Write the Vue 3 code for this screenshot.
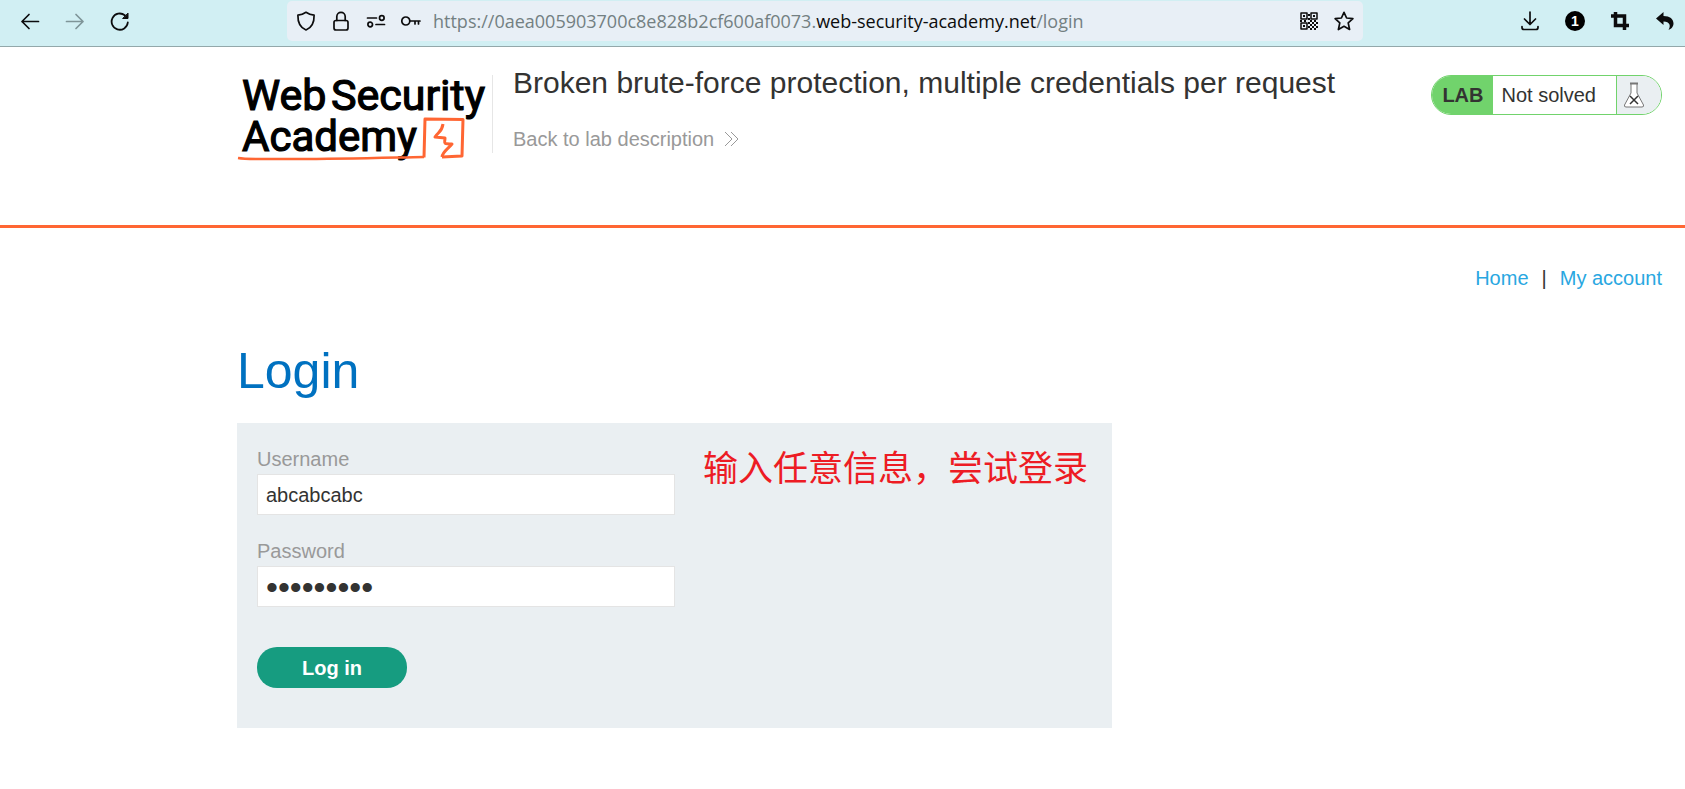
<script setup>
import { ref } from 'vue'

const username = ref('abcabcabc')
const password = ref('abcabcabc')
</script>

<template>
  <div class="page">
    <div class="toolbar">
      <div class="nav">
        <button type="button" aria-label="Back">
          <svg width="20" height="20" viewBox="0 0 20 20"><path d="M18.500 10.500H2M9 3.500L2 10.500L9 17.500" /></svg>
        </button>
        <button type="button" class="dim" aria-label="Forward">
          <svg width="20" height="20" viewBox="0 0 20 20"><path d="M1.500 10.500H18M11 3.500L18 10.500L11 17.500" /></svg>
        </button>
        <button type="button" aria-label="Reload">
          <svg width="20" height="20" viewBox="0 0 20 20">
            <path d="M17.800 11.500A8.100 8.100 0 1 1 14.800 4.300" stroke-width="1.800" />
            <path d="M18 2.500V7.500H13Z" class="solid" stroke-width="1" />
          </svg>
        </button>
      </div>

      <div class="address">
        <button type="button" aria-label="Tracking protection">
          <svg width="20" height="20" viewBox="0 0 20 20"><path d="M10 1.300C7.500 3 4.500 4 1.900 4.200C1.700 11 4 16.500 10 19C16 16.500 18.300 11 18.100 4.200C15.500 4 12.500 3 10 1.300Z" /></svg>
        </button>
        <button type="button" aria-label="Connection security">
          <svg width="20" height="20" viewBox="0 0 20 20"><rect x="3" y="9.500" width="14" height="9.500" rx="2" /><path d="M5.800 9.500V5.500a4.200 4.200 0 0 1 8.400 0V9.500" /></svg>
        </button>
        <button type="button" aria-label="Site permissions">
          <svg width="20" height="20" viewBox="0 0 20 20"><path d="M1.500 7H10.500M10 13.500H18.500" /><circle cx="15.800" cy="7" r="2.300" /><circle cx="4.200" cy="13.500" r="2.300" /></svg>
        </button>
        <button type="button" aria-label="Saved logins">
          <svg width="20" height="20" viewBox="0 0 20 20"><circle cx="4.800" cy="10" r="4" /><path d="M9 10H19M14 10V13M17.500 10V13" /></svg>
        </button>
        <div class="url" role="textbox" aria-label="Address">https://0aea005903700c8e828b2cf600af0073.<span>web-security-academy.net</span>/login</div>
        <button type="button" aria-label="QR code">
          <svg width="20" height="20" viewBox="0 0 20 20">
            <g stroke-width="1.500"><rect x="2" y="2" width="6" height="6" /><rect x="12" y="2" width="6" height="6" /><rect x="2" y="12" width="6" height="6" /></g>
            <path class="fill" d="M4 4h2v2H4zM14 4h2v2h-2zM4 14h2v2H4zM9 3h2v2H9zM9 7h2v2H9zM11 9h2v2h-2zM1 9h2v2H1zM5 9h2v2H5zM15 9h2v2h-2zM9 11h2v2H9zM13 11h2v2h-2zM17 11h2v2h-2zM11 13h2v2h-2zM15 13h2v2h-2zM9 15h2v2H9zM13 15h2v2h-2zM17 15h2v2h-2zM11 17h2v2h-2zM15 17h2v2h-2z" />
          </svg>
        </button>
        <button type="button" aria-label="Bookmark this page">
          <svg width="20" height="20" viewBox="0 0 20 20"><path d="M10 1.300L12.600 7L18.900 7.700L14.200 11.900L15.600 18.500L10 15.300L4.400 18.500L5.800 11.900L1.100 7.700L7.400 7Z" /></svg>
        </button>
      </div>

      <div class="tools">
        <button type="button" aria-label="Downloads">
          <svg width="20" height="20" viewBox="0 0 20 20"><path d="M10 1V13M4.500 8L10 13.500L15.500 8M2 15.500V16.500Q2 18.500 4 18.500H16Q18 18.500 18 16.500V15.500" /></svg>
        </button>
        <button type="button" class="badge" aria-label="One notification"><span>1</span></button>
        <button type="button" aria-label="Screenshot">
          <svg width="20" height="20" viewBox="0 0 20 20"><path class="crop" d="M1 5H14.500V19M5.500 1V14.500H19" /></svg>
        </button>
        <button type="button" aria-label="Undo">
          <svg width="20" height="20" viewBox="0 0 20 20"><path class="fill" d="M1 7.500L8.500 1V5C15 5 18.500 8 18.500 12.500C18.500 16 16 18 13.500 19C16 15 15 10.500 8.500 10.500V14Z" /></svg>
        </button>
      </div>
    </div>

    <header class="header">
      <a href="#" class="logo" aria-label="Web Security Academy">
        <svg width="252" height="98" viewBox="0 0 252 98">
          <g class="wordmark">
            <text x="5" y="45">Web</text>
            <text x="94" y="45">Security</text>
            <text x="5" y="86" class="second">Academy</text>
          </g>
          <g class="mark">
            <path stroke-width="3" d="M187 92.500L188 54L226 54.500L225 91L205 92" />
            <path stroke-width="2.500" d="M1 93C10 94.500 24 94 44 94C90 94.500 140 93 187 92" />
            <path stroke-width="3" d="M206 59C205 67 201 67 198 72L208 73C208 78 205 79 215 79C210 85 206 86 205 92" />
          </g>
        </svg>
      </a>
      <div class="heading">
        <h2>Broken brute-force protection, multiple credentials per request</h2>
        <a href="#" class="back">
          Back to lab description
          <svg width="15" height="16" viewBox="0 0 15 16"><path d="M1 1L8 8L1 15M7 1L14 8L7 15" /></svg>
        </a>
      </div>
      <div class="status">
        <strong>LAB</strong>
        <span class="state">Not solved</span>
        <span class="flask">
          <svg width="22" height="26" viewBox="0 0 22 26">
            <path fill="#fff" d="M8 1.500V11L1.500 23Q1 25 3 25H19Q21 25 20.500 23L14 11V1.500Z" />
            <path d="M7 1.500H15" stroke-width="2" />
            <path class="cross" d="M7 14L15 22M15 14L7 22" />
          </svg>
        </span>
      </div>
    </header>

    <main>
      <nav class="links"><a href="#">Home</a><span>|</span><a href="#">My account</a></nav>
      <h1>Login</h1>
      <section class="panel">
        <form @submit.prevent>
          <label for="username">Username</label>
          <input id="username" v-model="username" type="text" autocomplete="off">
          <label for="password">Password</label>
          <input id="password" v-model="password" type="password" autocomplete="off">
          <button type="submit">Log in</button>
        </form>
        <p class="note" lang="zh-CN">输入任意信息，尝试登录</p>
      </section>
    </main>
  </div>
</template>

<style>
body {
  margin: 0;
  background: #fff;
}
</style>

<style scoped>
* {
  box-sizing: border-box;
}
.page {
  font: 20px/24px "Liberation Sans", Arial, sans-serif;
  color: #333332;
}
button {
  border: 0;
  padding: 0;
  background: none;
}
a {
  text-decoration: none;
}
svg {
  display: block;
  flex: none;
}
.toolbar {
  display: flex;
  align-items: flex-start;
  padding: 1px 0 5px 7px;
  background: #d1eff3;
  border-bottom: 1px solid #93a8aa;
}
.toolbar button {
  display: flex;
  align-items: center;
  justify-content: center;
  height: 40px;
  color: #0c0c0d;
}
.toolbar svg {
  fill: none;
  stroke: currentColor;
  stroke-width: 1.700;
  stroke-linecap: round;
  stroke-linejoin: round;
}
.toolbar .solid {
  fill: currentColor;
}
.toolbar .fill {
  fill: currentColor;
  stroke: none;
}
.toolbar .crop {
  stroke-width: 3.500;
  stroke-linecap: butt;
  stroke-linejoin: miter;
}
.nav {
  display: flex;
}
.nav button {
  width: 45px;
}
.toolbar .dim {
  color: #7f9598;
}
.address {
  flex: 1;
  display: flex;
  align-items: center;
  min-width: 0;
  margin: 0 147px 0 145px;
  padding: 0 2px 0 1px;
  border-radius: 5px;
  background: #e8eff6;
}
.address button {
  flex: none;
  width: 35px;
}
.url {
  flex: 1;
  min-width: 0;
  padding-left: 5px;
  overflow: hidden;
  white-space: nowrap;
  font: 18px/24px "Open Sans", "Noto Sans", sans-serif;
  color: #738082;
}
.url span {
  color: #0c0c0d;
}
.tools {
  display: flex;
  gap: 5px;
}
.tools button {
  width: 40px;
}
.badge span {
  width: 20px;
  height: 20px;
  border-radius: 50%;
  background: #000;
  color: #fff;
  font: bold 14px/20px "Liberation Sans", Arial, sans-serif;
}
.header {
  display: flex;
  align-items: flex-start;
  min-height: 181px;
  padding: 18px 23px 0 237px;
  border-bottom: 3px solid #ff6633;
}
.logo {
  flex: none;
}
.wordmark {
  font-family: Roboto, sans-serif;
  font-size: 43px;
  font-weight: 400;
  fill: #000;
  stroke: #000;
  stroke-width: 1.200;
}
.second {
  font-size: 42px;
}
.mark {
  fill: none;
  stroke: #ff6633;
  stroke-linejoin: round;
}
.heading {
  flex: 1;
  margin: 10px 20px 0 3px;
  padding-left: 20px;
  border-left: 1px solid #e6e6e6;
}
h2 {
  margin: -10px 0 0;
  font-size: 30px;
  line-height: 36px;
  font-weight: 400;
}
.back {
  display: flex;
  align-items: center;
  gap: 10px;
  padding: 26px 0 2px;
  color: #999;
}
.back svg {
  fill: none;
  stroke: #999;
}
.status {
  flex: none;
  display: flex;
  margin-top: 10px;
  height: 40px;
  border: 1px solid #71d36c;
  border-radius: 20px;
  overflow: hidden;
  line-height: 38px;
}
.status strong {
  padding: 0 9px 0 10px;
  background: #71d36c;
}
.state {
  padding: 0 20px 0 9px;
}
.flask {
  display: flex;
  align-items: center;
  width: 45px;
  padding-left: 6px;
  border-left: 1px solid #71d36c;
  background: #eaeff2;
}
.flask svg {
  fill: none;
  stroke: #777;
}
.flask .cross {
  stroke: #333;
  stroke-width: 1.500;
}
main {
  padding: 38px 23px 60px 237px;
}
.links {
  display: flex;
  justify-content: flex-end;
  gap: 13px;
}
.links a {
  color: #29a7e1;
}
h1 {
  margin: 51px 0 22px;
  font-size: 50px;
  line-height: 60px;
  font-weight: 400;
  color: #0071c0;
}
.panel {
  display: flex;
  align-items: flex-start;
  gap: 28px;
  width: fit-content;
  padding: 24px 24px 40px 20px;
  background: #eaeff2;
}
form {
  display: flex;
  flex-direction: column;
  align-items: flex-start;
  width: 418px;
}
label {
  line-height: 24px;
  margin-bottom: 3px;
  color: #999;
}
input {
  width: 100%;
  height: 41px;
  margin: 0 0 24px;
  padding: 2px 8px 0;
  border: 1px solid #e4e4e4;
  border-radius: 0;
  background: #fff;
  font: 20px/24px "Liberation Sans", Arial, sans-serif;
  color: #333332;
  outline: 0;
}
input[type="password"] {
  font-size: 34px;
}
form button {
  width: 150px;
  height: 41px;
  margin-top: 16px;
  border-radius: 20px;
  background: #169c80;
  color: #fff;
  font: bold 20px/24px "Liberation Sans", Arial, sans-serif;
}
.note {
  margin: 0;
  font: 35px/38px "Noto Sans CJK SC", sans-serif;
  color: #ed1c24;
}
</style>
